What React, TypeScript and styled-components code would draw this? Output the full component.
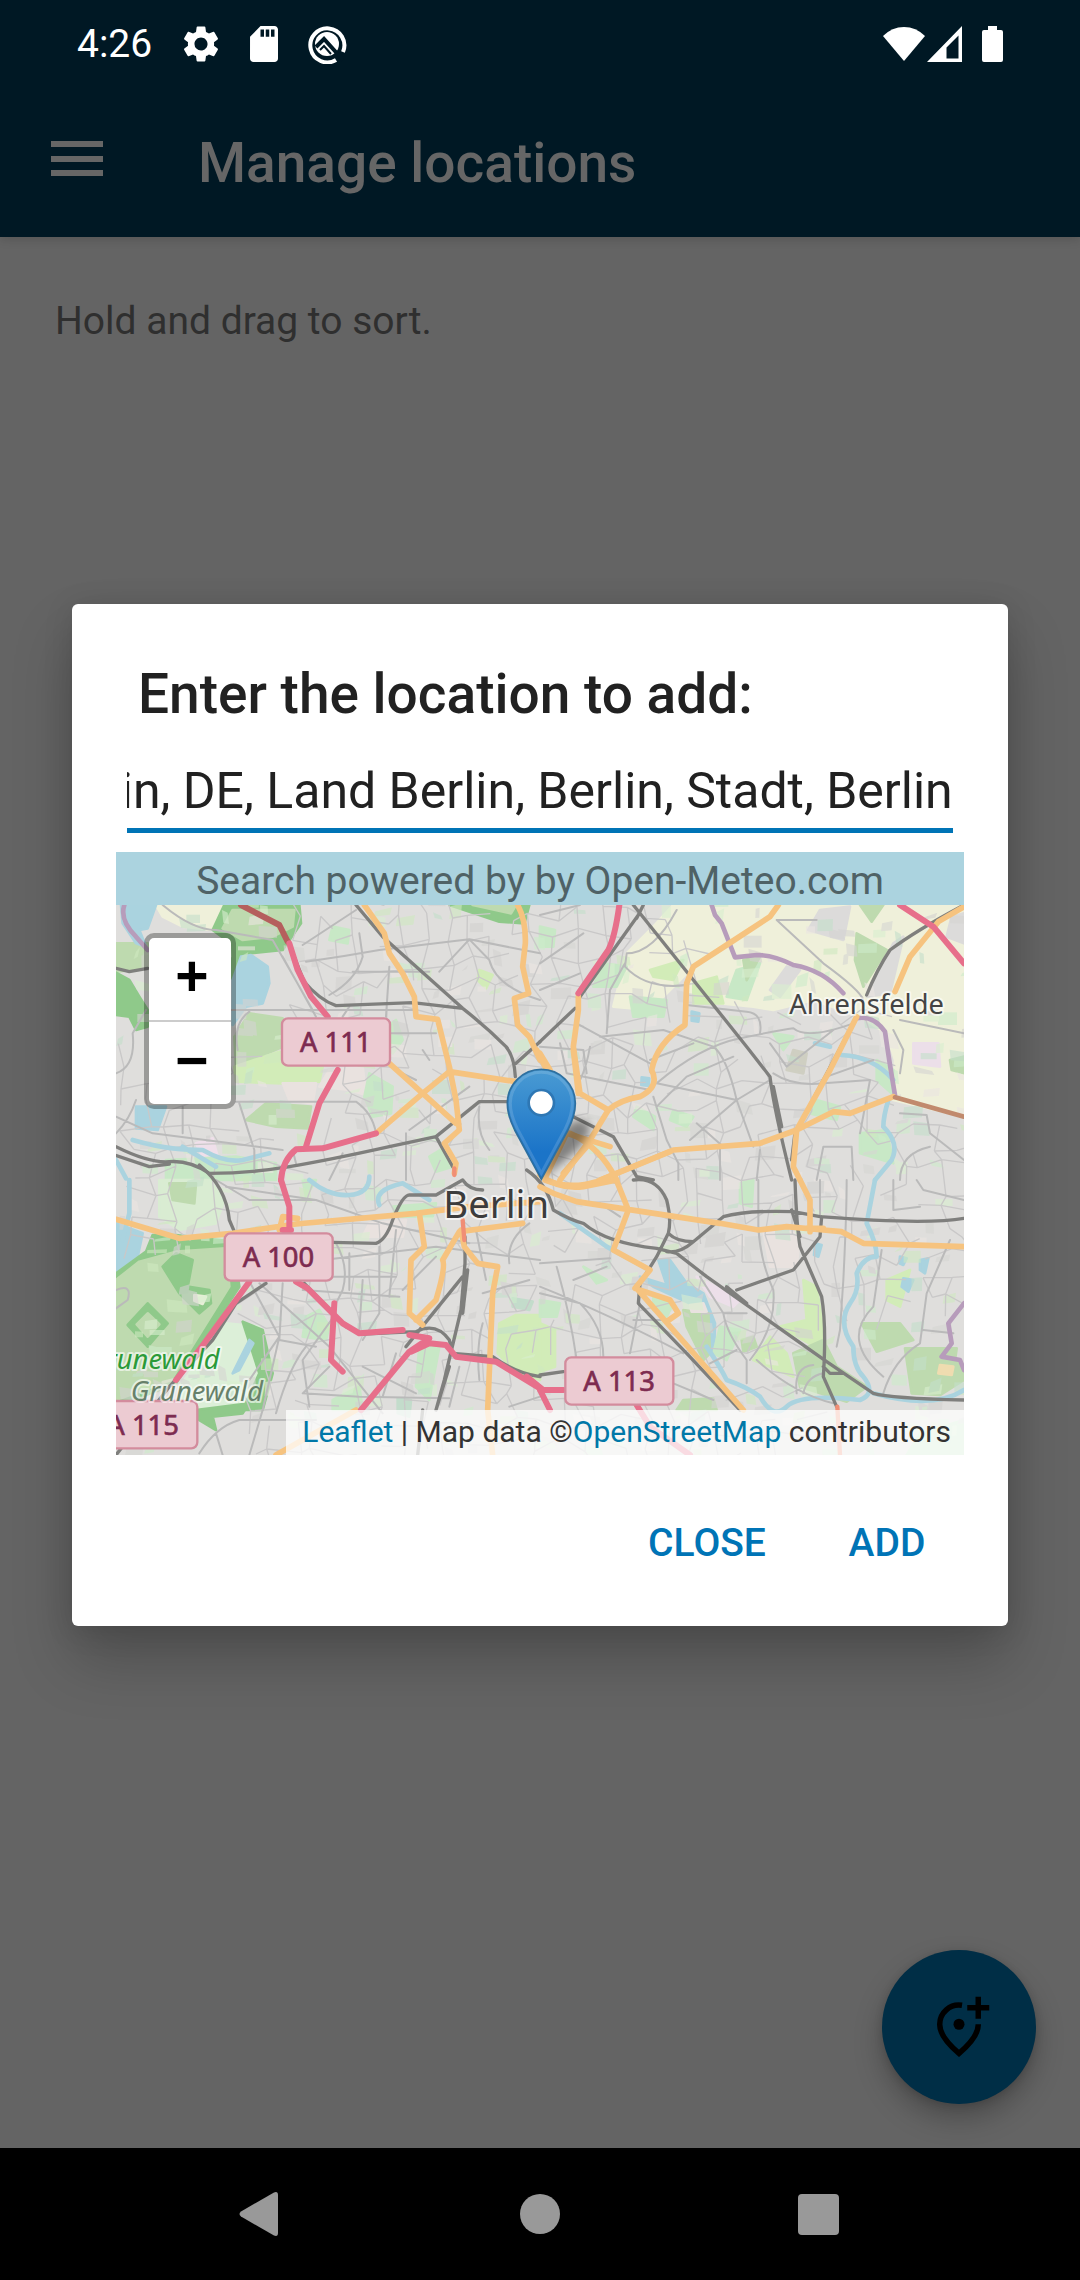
import React, { useEffect, useRef, useState } from "react";
import styled, { createGlobalStyle } from "styled-components";

const GlobalStyle = createGlobalStyle`
  *, *::before, *::after { box-sizing: border-box; }
  body { margin: 0; background: #646464; font-family: Roboto, "Noto Sans", sans-serif; }
  button, input { font: inherit; color: inherit; }
  button { border: 0; padding: 0; background: none; cursor: pointer; }
  svg { display: block; }
`;

const Screen = styled.div`
  position: relative;
  display: flex;
  flex-direction: column;
  min-height: 100vh;
  background: #646464;
`;

const Header = styled.header`
  background: #001824;
  box-shadow: 0 2px 10px rgba(0, 0, 0, 0.16);
`;

const StatusBar = styled.div`
  display: flex;
  align-items: center;
  justify-content: space-between;
  height: 88px;
  padding: 0 77px;
  color: #fff;
  font-size: 39px;
`;

const StatusGroup = styled.div<{ $gap: number }>`
  display: flex;
  align-items: center;
  gap: ${(p) => p.$gap}px;
`;

const Toolbar = styled.div`
  display: flex;
  align-items: center;
  gap: 88px;
  height: 149px;
  padding: 0 44px;
  color: #666;
`;

const MenuButton = styled.button`
  width: 66px;
  height: 74px;
  padding-bottom: 8px;
`;

const PageTitle = styled.h1`
  margin: 0;
  font-size: 55px;
  line-height: 64px;
  font-weight: 500;
`;

const Main = styled.main`
  display: flex;
  flex: 1;
  flex-direction: column;
  justify-content: space-between;
  padding: 61px 44px 44px 55px;
`;

const Hint = styled.p`
  margin: 0;
  color: #2f2f2f;
  font-size: 39px;
  line-height: 46px;
`;

const Fab = styled.button`
  display: grid;
  place-items: center;
  align-self: flex-end;
  width: 154px;
  height: 154px;
  border-radius: 50%;
  background: #002e46;
  color: #000;
  box-shadow: 0 14px 28px rgba(0, 0, 0, 0.26), 0 2px 8px rgba(0, 0, 0, 0.14);
`;

const NavBar = styled.nav`
  display: grid;
  grid-template-columns: repeat(3, 1fr);
  height: 132px;
  padding: 0 123px;
  background: #000;
`;

const NavButton = styled.button`
  display: grid;
  place-items: center;
  color: #999;
`;

const Overlay = styled.div`
  position: absolute;
  inset: 82px 0 132px;
  display: flex;
  align-items: center;
  padding: 0 72px;
`;

const Dialog = styled.section`
  flex: 1;
  min-width: 0;
  padding: 58px 44px 17px;
  border-radius: 6px;
  background: #fff;
  color: #212121;
  box-shadow: 0 34px 60px rgba(0, 0, 0, 0.22), 0 4px 30px rgba(0, 0, 0, 0.12);
`;

const DialogTitle = styled.h2`
  margin: 0 22px 36px;
  font-size: 55px;
  line-height: 64px;
  font-weight: 500;
`;

const FieldRow = styled.div`
  padding: 0 11px 19px;
`;

const LocationInput = styled.input`
  display: block;
  width: 100%;
  height: 71px;
  padding: 0 0 8px;
  border: 0;
  border-bottom: 5px solid #0074b6;
  border-radius: 0;
  outline: 0;
  background: none;
  font-size: 50px;
  line-height: 58px;
`;

const Credit = styled.p`
  margin: 0;
  padding-top: 5px;
  background: #abd3df;
  color: #4f6266;
  font-size: 39px;
  line-height: 48px;
  text-align: center;
`;

const MapFrame = styled.div`
  position: relative;
  aspect-ratio: 848 / 550;
  overflow: hidden;
`;

const ZoomControl = styled.div`
  position: absolute;
  top: 28px;
  left: 28px;
  display: flex;
  flex-direction: column;
  border: 5px solid rgba(0, 0, 0, 0.3);
  border-radius: 10px;
  background: #fff;
  background-clip: padding-box;
`;

const ZoomButton = styled.button`
  width: 82px;
  height: 82px;
  padding: 0 0 6px 4px;
  color: #000;
  font-family: "Liberation Sans", Arial, sans-serif;
  font-size: 57px;
  font-weight: 700;
  line-height: 76px;

  & + & {
    height: 84px;
    border-top: 2px solid #ccc;
  }
`;

const Attribution = styled.div`
  position: absolute;
  right: 0;
  bottom: 0;
  padding: 0 13px 2px 16px;
  background: rgba(255, 255, 255, 0.75);
  color: #333;
  font-size: 30px;
  line-height: 43px;
  white-space: nowrap;

  a {
    color: #0078a8;
    text-decoration: none;
  }
`;

const Actions = styled.div`
  display: flex;
  justify-content: flex-end;
  gap: 4px;
  margin-right: -11px;
  padding-top: 22px;
`;

const ActionButton = styled.button`
  min-width: 176px;
  height: 132px;
  color: #0074b6;
  font-size: 39px;
  font-weight: 500;
`;

/* ---- Map drawing ----------------------------------------------------- */

type Shape = [fill: string, d: string];
type Sheet = { x: number; y: number };

const NW: Sheet = { x: 0, y: 0 };
const NE: Sheet = { x: 1272, y: 0 };
const SW: Sheet = { x: 0, y: 840 };
const SE: Sheet = { x: 1272, y: 840 };
const CENTER: Sheet = { x: 942, y: 450 };

const FARM = "#eff0da";
const WOOD = "#bedaaf";
const WOOD_EDGE = "#8fc98a";
const WATER = "#aad3df";
const GRASS = "#d2ecb8";
const PARK = "#c8e8c6";
const HEATH = "#e9e2df";

const land: { at: Sheet; shapes: Shape[] }[] = [
  {
    at: NW,
    shapes: [
      [FARM, "M120 15H330L290 90 200 80 140 50Z"],
      [WOOD, "M0 130H95V205L0 215Z"],
      [WOOD_EDGE, "M0 218 40 240 70 290 95 330V380L60 390 40 350 0 345Z"],
      [WOOD_EDGE, "M325 15H550L555 70 500 150 400 160 375 235 345 235V130L290 90Z"],
      [WOOD, "M350 30H535L530 80 470 110 380 120 320 85Z"],
      [WATER, "M15 15H120L95 85 70 90 90 140 60 130 20 70Z"],
      [WATER, "M375 170 405 165 455 200 460 250 440 310 390 320 350 375V240Z"],
      [WATER, "M60 620H150L125 690 60 685Z"],
      [WOOD, "M400 340 500 355V440L360 500 355 410Z"],
      [GRASS, "M355 500 490 455 620 500 610 545 500 550 360 545Z"],
      [HEATH, "M640 510 740 500 750 585 700 570 610 560Z"],
      [HEATH, "M500 550 600 550 590 610 520 600Z"],
      [WOOD, "M450 610 585 620 575 685 480 680 390 660Z"],
      [PARK, "M760 520 830 560 825 640 770 650 745 590Z"],
      [WOOD_EDGE, "M1000 15H1240L1225 70 1150 65Z"],
      [WOOD, "M1070 15H1200L1185 40Z"],
      [PARK, "M840 360 860 420 830 460 790 400Z"],
      [PARK, "M650 80 700 90 695 130 640 120Z"],
      [GRASS, "M1090 210 1130 225 1110 265 1085 240Z"],
      [PARK, "M940 770 990 740 1010 800 960 815Z"],
      ["#efdfea", "M240 730 290 715 305 770 265 780Z"],
      [PARK, "M150 780 360 770 480 790 480 840H150Z"],
    ],
  },
  {
    at: NE,
    shapes: [
      [FARM, "M400 15H1272V650L1060 600 1065 480 1040 400 960 350 820 300 700 330 640 320 440 300 450 210 330 330 220 320 260 160 340 80Z"],
      ["#dcdbda", "M840 30 930 20 910 120 805 90Z"],
      ["#dcdbda", "M1235 50 1272 40V130L1220 110Z"],
      ["#dcdbda", "M1060 130 1090 110 1050 280 980 290Z"],
      ["#dcdbda", "M740 200 780 210 720 290 690 270Z"],
      [WOOD, "M950 100 1040 150 970 260 945 180Z"],
      [WOOD, "M960 15H1030L995 65Z"],
      [PARK, "M590 210 660 190 620 300 560 290Z"],
      [WOOD, "M610 180 660 170 620 240Z"],
      [GRASS, "M330 210 430 180 400 240 340 230Z"],
      [PARK, "M270 290 380 300 370 350 280 350Z"],
      [PARK, "M190 190 260 200 230 260 160 260Z"],
      [GRASS, "M460 250 530 230 550 310 460 310Z"],
      ["#ecdfe9", "M1120 430H1195L1200 500 1120 490Z"],
      [WOOD, "M1230 480 1272 470V520L1235 510Z"],
      [PARK, "M1010 480 1060 510 1055 580 1010 540Z"],
      [PARK, "M290 620 345 650 340 690 280 650Z"],
      [PARK, "M400 630 460 650 440 680 390 660Z"],
      [PARK, "M960 700 1040 690 1060 790 960 760Z"],
      ["#cfcfc2", "M760 450 800 460 790 520 740 510Z"],
      [PARK, "M700 400 760 410 730 450Z"],
      [PARK, "M830 600 900 620 890 660 810 640Z"],
      [WATER, "M455 335 478 340 475 365 455 362Z"],
      [WATER, "M305 532 328 535 326 558 304 555Z"],
      [PARK, "M0 80 45 90 40 140 0 140Z"],
    ],
  },
  {
    at: SW,
    shapes: [
      [WATER, "M0 130 80 160 65 230 0 285Z"],
      ["#d9ecd2", "M130 0H280L325 60 300 130 190 150 130 110Z"],
      [WOOD, "M160 10H240L235 70 170 60Z"],
      [WOOD_EDGE, "M110 165H180L350 185 370 320 180 610 0 680V280L90 215Z"],
      [WOOD, "M70 245 180 215 330 205 340 320 165 600 0 660V300Z"],
      [WOOD_EDGE, "M140 260 180 220 230 240 215 320 280 330 285 370 250 400 190 340Z"],
      [WOOD_EDGE, "M95 370 155 430 95 500 35 435Z"],
      [WOOD, "M95 400 130 433 95 470 62 433Z"],
      ["#e8efd8", "M235 345 270 350 260 372 235 362Z"],
      ["#dcefd8", "M330 430 430 440 470 560 440 680 210 690 190 620Z"],
      [WOOD_EDGE, "M380 425 440 450 470 580 440 690 380 690 430 580Z"],
      [WATER, "M400 480 412 490 370 570 350 580Z"],
      [WOOD_EDGE, "M240 690 400 670 380 700 290 710 300 750 250 720Z"],
      [GRASS, "M1150 430 1200 405H1272V600L1200 575 1145 520Z"],
      [PARK, "M570 410 610 390 640 440 630 480 560 470Z"],
      [PARK, "M910 500 970 500 940 660 900 620Z"],
      [PARK, "M650 660 730 620 740 690 650 690Z"],
      ["#c3dccb", "M845 655 885 660 880 710 845 700Z"],
      [PARK, "M830 80 960 70 950 110 840 110Z"],
      ["#c3dccb", "M1190 355 1250 365 1240 390 1190 380Z"],
      [HEATH, "M760 130 870 120 860 170 740 170Z"],
      [PARK, "M560 0H600L570 50Z"],
    ],
  },
  {
    at: SE,
    shapes: [
      [GRASS, "M0 430 45 450V560L0 575Z"],
      [WATER, "M355 240 390 240 440 310 490 340 525 430 522 520 505 520 500 430 460 375 340 320 300 290 380 315Z"],
      ["#ecdfe9", "M470 290 600 360 580 380 510 350Z"],
      [WOOD, "M430 390 505 400 510 520 490 540 440 440Z"],
      [HEATH, "M450 375 490 370 500 395 455 395Z"],
      [HEATH, "M670 150 780 160 770 260 690 260Z"],
      [GRASS, "M790 300 830 320 860 520 720 440 800 420Z"],
      [WOOD, "M965 430 1080 430 1120 480 1010 515Z"],
      [WOOD, "M1095 505 1250 505 1245 540 1272 560V600L1200 645 1115 640Z"],
      [WOOD, "M760 520 850 480 890 560 980 620 920 665 780 620Z"],
      [GRASS, "M640 540 690 470 740 520 760 590Z"],
      [WOOD, "M605 480 640 470 650 500 610 515Z"],
      [WOOD, "M430 660 520 655 530 690H410Z"],
      [PARK, "M540 440 600 450 560 540 520 520Z"],
      [GRASS, "M1040 300 1110 270 1080 380 1040 360Z"],
      [WATER, "M1080 230 1100 235 1090 255 1078 250Z"],
      [WATER, "M1140 240 1165 235 1155 280 1140 270Z"],
      [WATER, "M1090 295 1120 300 1105 335 1085 320Z"],
      [WATER, "M825 190 845 195 835 230 822 225Z"],
      [PARK, "M340 350 400 370 380 410 340 390Z"],
      [PARK, "M600 10 640 0 635 80 600 70Z"],
      [PARK, "M0 360 60 370 50 410 0 410Z"],
      [PARK, "M130 260 200 300 170 310Z"],
      ["#efdcb0", "M1200 555 1240 560 1235 585 1195 580Z"],
      [PARK, "M1140 760 1272 720V825H1100Z"],
    ],
  },
];

const lines: { color: string; width: number; paths: [Sheet, string][] }[] = [
  {
    color: WATER,
    width: 14,
    paths: [
      [NW, "M50 720Q120 740 170 745T260 750Q330 790 380 780L460 760M200 740L300 800M0 780 30 835"],
      [SW, "M40 0V100L20 180M580 0Q640 50 700 45T760 -10M790 75Q770 30 860 10L940 60"],
      [SE, "M60 100 200 200 330 270M500 500Q540 560 560 600Q620 620 660 650Q700 720 740 680T960 660Q1010 640 970 590Q940 560 940 500Q890 430 930 370Q960 330 950 280Q970 230 1010 230 1010 190 980 130L1005 0M1000 640Q1180 690 1272 630"],
      [NE, "M1045 600Q1030 650 1030 680 1080 730 1055 780L1005 840M905 465Q1000 470 1060 540M825 430 870 440"],
    ],
  },
  {
    color: "#bababa",
    width: 6,
    paths: [
      [NW, "M140 15Q230 90 300 90L470 120 590 330M560 135 720 30M570 185Q680 170 790 150L1060 118 1272 160M730 100 740 170Q720 240 640 285M710 215H940M820 200 810 350M330 330H890M365 450Q350 370 400 335M500 170 600 350M700 320 680 350M1060 118 970 215M1272 300Q1140 260 1120 180L1060 118M0 520Q60 500 50 400L90 330M60 600Q40 660 0 700M360 605H720Q770 640 780 700M370 610 415 750V820M200 620V700M0 650 110 700 500 750M870 700V840M920 450 940 480M640 840 680 760M900 540 860 520M1060 560 880 690M1090 620Q1080 700 1120 750M820 400H960M530 750 540 790"],
      [NE, "M0 45 120 15M130 100 0 190M0 270 120 220M260 160 255 200Q320 270 440 255M210 270 200 400M255 190 210 270M440 315 620 335Q670 340 660 400M260 160Q340 160 410 30M710 60 850 190Q960 270 970 300M710 60H830M350 550Q480 440 600 415T760 385Q800 420 940 370M110 370 330 490M180 410 370 390 520 440Q560 470 590 600L640 740M330 480 460 430M350 620 440 530 580 470M350 550 590 600 690 540M700 520Q760 560 850 550L990 540 960 700M340 590 380 720 415 790V840M590 600 450 720M690 430 740 500 880 390M1080 360 1272 400M1060 390 1090 450 1080 520M0 440 130 450 140 520M60 430 80 520 330 570M150 440Q140 500 120 540M860 530 1000 480M1080 640 1160 645 1170 700 1272 780M1080 840Q1080 760 1170 740M650 840 660 750M940 840 935 740H850L830 840M540 740V840M470 670 550 740"],
      [SW, "M330 20 600 60 800 130 1060 190M300 0 400 60H600M660 190Q700 260 680 330L660 370M620 240 960 200 1272 240M560 290 840 290M560 330 850 350M700 220V330M790 200V400L740 480M840 150 820 350M430 310 640 500 800 700M500 310 490 480 600 500M360 230 490 470 440 690 400 825M490 470 400 600M570 500Q520 560 480 700M640 560 560 640 730 650 1000 655M740 300 730 450M960 230 860 330M250 820Q300 740 370 720H600M300 760 320 825M1100 340 1240 300M1080 150 1110 300M1180 250Q1170 180 1240 130M1100 430Q1080 500 1090 600M1180 680 1272 650M0 330Q50 310 35 360L0 385M660 400 560 540 580 680M840 520 800 650M1030 560 1000 680M740 560 900 640"],
      [SE, "M0 250 210 235M0 320Q200 400 430 520M50 260Q90 400 110 540M0 340 120 370Q190 440 190 530M180 70 240 110M300 370 270 520M655 0V140Q660 240 700 330 710 440 630 540M620 610 620 540Q560 460 550 400L480 290M550 400 620 400M650 540Q760 640 880 670M920 0Q920 100 910 300L900 450 890 500M1025 210 1000 380Q900 480 1030 590M1030 640Q1060 540 1140 490L1160 340 1230 180M1060 0V90L1140 80M1150 450 1240 460M840 110V0M770 640Q760 560 820 555M790 640Q800 590 850 580M400 610 520 660M510 550 590 510M1130 0 1150 30 1272 60M380 420 280 420M100 300 200 260"],
    ],
  },
  {
    color: "#b79cbb",
    width: 14,
    paths: [
      [NE, "M515 15 525 45 545 70 585 172 650 165Q700 165 760 195 850 210 910 280M950 355Q1000 345 1035 395 1050 500 1065 585"],
      [NW, "M25 15Q10 60 60 110L95 150"],
      [SE, "M1272 370 1225 430 1235 490 1205 530 1260 540 1272 570"],
    ],
  },
  {
    color: "#7f7f7d",
    width: 10,
    paths: [
      [NW, "M720 15 800 110 1040 325Q1110 380 1170 440 1195 470 1198 530M1200 490 1272 425M560 240Q610 300 660 317L890 308 1040 325M0 740Q100 790 160 785T280 820Q400 820 520 800T820 740L960 710 1090 605H1180M960 710 1010 800M0 205 40 215 95 205M515 120 570 260"],
      [NE, "M0 425 105 325M120 290 295 45M280 15 620 440 690 530Q700 620 755 840M310 15 290 55M1272 15Q1130 90 1050 150 1010 210 980 285M945 360 850 540 765 700 755 780M100 650 220 710 290 830 340 840M700 560 725 680"],
      [SW, "M-20 -80 100 -40 160 -48M250 -45Q330 20 340 120L355 155M650 187 780 190Q810 180 830 120 860 45 880 45H960L1040 0Q1060 30 1100 30M1047 170V250L1035 390 985 600 960 690M1055 270 1040 400M450 310 360 370 290 480 160 620 0 825M565 310 690 440 740 462 900 455Q960 425 1000 480L1010 520 1130 530Q1200 580 1272 590M920 690 905 825M1040 290 870 500M960 690 1000 560"],
      [SE, "M-40 -30Q20 10 40 90 90 120 130 130 200 190 350 205L410 220 500 290 860 545 1000 640Q1050 655 1272 660M280 0Q350 -10 380 60 395 120 385 160L350 230 300 310 295 370 440 520 600 690M385 160Q410 185 460 185L550 110Q620 90 760 95L840 110Q1160 135 1272 115M765 0Q770 140 780 200L845 350Q860 440 850 590L890 680M590 330 760 270 840 170 845 110M460 185Q420 220 380 215M850 560 870 580 910 580M0 585 70 575M560 320 620 370M755 90 780 170"],
    ],
  },
  {
    color: "#f6c37f",
    width: 17,
    paths: [
      [NW, "M745 15 805 100 820 160 860 220 895 290 900 350 965 358 1000 500 1020 600 1030 690 985 730 1020 790 1015 820M820 490 920 580 1020 670M780 700 920 580 1000 515 1200 545M1205 15Q1230 60 1228 130L1220 200 1238 280 1195 295 1205 375 1240 410 1272 480"],
      [NE, "M0 460 30 510M115 290V330L100 440 120 580 205 630 150 720 60 840M205 630Q240 600 300 590 360 560 335 510 350 430 435 375L440 250 460 200 560 135 690 50 715 15M1272 20 1195 65 1110 170 1065 275M950 350 870 510 770 690 760 800 780 840M180 840 400 750 660 730 770 690 880 635 930 640 1060 590M90 700Q180 740 230 840"],
      [SW, "M0 118 190 175 350 160 540 132 900 100 1060 80 1272 65M490 150 500 110 545 115M910 100 925 200 885 240 880 400 920 435M900 420 960 360Q990 260 980 240L1030 155 1220 130M1035 150 1045 200 1085 250 1145 260 1130 340 1115 690 1130 825M480 825 720 690"],
      [SE, "M0 20 40 40 110 65 540 130 655 150 740 140 850 150 905 155 970 190 1272 200M0 -15Q60 30 130 20L230 0M225 -10 265 90 220 210 330 270 285 325 390 360 415 400 380 425M290 325 610 690M780 0 810 60V155M800 145H850"],
      [CENTER, "M320 0 350 60M430 0 445 130M345 385 410 250 540 290M345 390Q420 420 500 395L720 305M400 370 470 290"],
    ],
  },
  {
    color: "#f08e75",
    width: 13,
    paths: [
      [NW, "M1015 805V825"],
      [SW, "M1040 120 1045 180"],
      [SE, "M892 680 900 825"],
    ],
  },
  {
    color: "#c18a6d",
    width: 14,
    paths: [[NE, "M1065 592 1272 650"]],
  },
  {
    color: "#b55f5d",
    width: 18,
    paths: [
      [NW, "M375 15 490 75 515 125"],
    ],
  },
  {
    color: "#e76f8b",
    width: 18,
    paths: [
      [NW, "M520 130 545 210 585 290 635 350M665 510 610 610 570 740M780 700 620 745 540 748Q500 780 495 840"],
      [NE, "M238 15Q225 110 205 150L115 280M1080 15 1180 80 1272 190"],
      [SW, "M495 0 520 80V155M500 150H525M400 305 265 490 180 600M540 305 575 325 680 430 730 460 860 450M655 370 645 540 680 575M880 465 940 475 880 515 735 690M885 515 940 490 990 495 1020 530 1140 545 1272 625"],
      [SE, "M0 630H70M0 630 30 690M290 675 330 740 450 825M-40 590 10 630"],
    ],
  },
];

const patchColors = ["#cdeccb", "#d9efd0", "#d3d2d0", "#d6d6d3", "#ebe6e2", "#c4dfcb", "#cfe9c0", "#d5d4d2"];

function buildTexture() {
  let seed = 20477;
  const rand = () => {
    seed = (seed * 16807) % 2147483647;
    return seed / 2147483647;
  };
  const patches: Shape[] = [];
  for (let i = 0; i < 620; i += 1) {
    const x = rand() * 2544;
    const y = rand() * 1650;
    const w = 12 + rand() * 50;
    const h = 10 + rand() * 36;
    const s = (rand() - 0.5) * 30;
    const color = patchColors[Math.floor(rand() * patchColors.length)];
    patches.push([color, `M${x | 0} ${y | 0}l${w | 0} ${s | 0}l${(s / 2) | 0} ${h | 0}l${-w | 0} ${(-s / 2) | 0}Z`]);
  }
  const step = 66;
  const cols = 40;
  const rows = 27;
  const nodes = Array.from({ length: rows }, (_, r) =>
    Array.from({ length: cols }, (_, c) => [
      Math.round(c * step + (rand() - 0.5) * 50 + r * 3),
      Math.round(r * step + (rand() - 0.5) * 50 - c * 2 + 20),
    ]),
  );
  const open = (x: number, y: number) =>
    (x > 1720 && y < 300) ||
    (x > 2320 && y < 620) ||
    (x < 360 && y > 1020) ||
    (x > 340 && x < 640 && y > 330 && y < 700) ||
    (x < 520 && y < 420) ||
    (x > 2050 && y > 1250) ||
    (x > 2420 && y > 1200);
  let streets = "";
  for (let r = 0; r < rows; r += 1) {
    for (let c = 0; c < cols; c += 1) {
      const [x, y] = nodes[r][c];
      if (open(x, y)) continue;
      if (c + 1 < cols && rand() < 0.62) streets += `M${x} ${y}L${nodes[r][c + 1].join(" ")}`;
      if (r + 1 < rows && rand() < 0.62) streets += `M${x} ${y}L${nodes[r + 1][c].join(" ")}`;
    }
  }
  return { patches, streets };
}

const texture = buildTexture();

const MapText = styled.text<{ $size: number; $color: string; $italic?: boolean }>`
  fill: ${(p) => p.$color};
  font-family: "Noto Sans", "Open Sans", sans-serif;
  font-size: ${(p) => p.$size}px;
  font-style: ${(p) => (p.$italic ? "italic" : "normal")};
  paint-order: stroke;
  stroke: rgba(255, 255, 255, 0.6);
  stroke-width: 12px;
  stroke-linejoin: round;
`;

const ShieldText = styled.text`
  fill: #7d2b50;
  stroke: #7d2b50;
  stroke-width: 2px;
  font-family: "Noto Sans", "Open Sans", sans-serif;
  font-size: 82px;
`;

const shields = [
  { x: 498, y: 355, label: "A 111" },
  { x: 326, y: 1000, label: "A 100" },
  { x: 1348, y: 1372, label: "A 113" },
  { x: -80, y: 1503, label: "A 115" },
];

const shift = (s: Sheet) => `translate(${s.x} ${s.y})`;

function BerlinMap() {
  return (
    <svg viewBox="0 15 2544 1650" width="100%" height="100%" preserveAspectRatio="xMidYMid slice" role="img" aria-label="Map of Berlin">
      <defs>
        <linearGradient id="pin" x1="0" y1="0" x2="0" y2="1">
          <stop offset="0" stopColor="#4a9bd3" />
          <stop offset="0.75" stopColor="#1b74c8" />
        </linearGradient>
        <filter id="soft" x="-50%" y="-50%" width="200%" height="200%">
          <feGaussianBlur stdDeviation="12" />
        </filter>
      </defs>
      <rect y="15" width="2544" height="1650" fill="#dfdedc" />
      {land.map(({ at, shapes }, i) => (
        <g key={i} transform={shift(at)}>
          {shapes.map(([fill, d]) => (
            <path key={d} d={d} fill={fill} stroke={fill} strokeWidth="8" strokeLinejoin="round" />
          ))}
        </g>
      ))}
      <g opacity="0.6">
        {texture.patches.map(([fill, d]) => (
          <path key={d} d={d} fill={fill} />
        ))}
      </g>
      <path d={texture.streets} fill="none" stroke="#c9c8c8" strokeWidth="4" />
      {lines.map(({ color, width, paths }) => (
        <g key={color} fill="none" stroke={color} strokeWidth={width} strokeLinecap="round" strokeLinejoin="round">
          {paths.map(([at, d]) => (
            <path key={d} d={d} transform={shift(at)} />
          ))}
        </g>
      ))}
      {shields.map(({ x, y, label }) => (
        <g key={label}>
          <rect x={x} y={y} width="324" height="142" rx="18" fill="#eccbd2" stroke="#d38c9d" strokeWidth="7" />
          <ShieldText x={x + 54} y={y + 102}>
            {label}
          </ShieldText>
        </g>
      ))}
      <MapText x="2020" y="342" $size={82} $color="#444">Ahrensfelde</MapText>
      <MapText x="982" y="953" $size={115} $color="#3c3c3c">Berlin</MapText>
      <MapText x="311" y="1408" textAnchor="end" $size={82} $color="#2b9a38" $italic>Grunewald</MapText>
      <MapText x="44" y="1502" $size={82} $color="#67806a" $italic>Grunewald</MapText>
      <g transform={shift(CENTER)}>
        <path d="M334 388 385 270Q420 195 470 215 500 240 430 310Z" fill="#000" opacity="0.42" filter="url(#soft)" />
        <path
          d="M232 160A102 102 0 0 1 436 160C436 192 424 220 414 240L334 388 254 240C244 220 232 192 232 160Z"
          fill="url(#pin)"
          stroke="#2e6f9f"
          strokeWidth="5"
        />
        <path
          d="M241 160A93 93 0 0 1 427 160C427 190 416 216 406 236L334 370 262 236C252 216 241 190 241 160Z"
          fill="none"
          stroke="#fff"
          strokeOpacity="0.14"
          strokeWidth="9"
        />
        <circle cx="334" cy="158" r="38" fill="#fff" stroke="#2e77b4" strokeWidth="8" />
      </g>
    </svg>
  );
}

/* ---- Icons ------------------------------------------------------------ */

const GearIcon = () => (
  <svg width="40" height="40" viewBox="1 1 22 22" fill="#fff" aria-hidden="true">
    <path d="M19.14 12.94c.04-.3.06-.61.06-.94 0-.32-.02-.64-.07-.94l2.03-1.58a.49.49 0 0 0 .12-.61l-1.92-3.32a.488.488 0 0 0-.59-.22l-2.39.96c-.5-.38-1.03-.7-1.62-.94l-.36-2.54a.484.484 0 0 0-.48-.41h-3.84c-.24 0-.43.17-.47.41l-.36 2.54c-.59.24-1.13.57-1.62.94l-2.39-.96c-.22-.08-.47 0-.59.22L2.74 8.87c-.12.21-.08.47.12.61l2.03 1.58c-.05.3-.09.63-.09.94s.02.64.07.94l-2.03 1.58a.49.49 0 0 0-.12.61l1.92 3.32c.12.22.37.29.59.22l2.39-.96c.5.38 1.03.7 1.62.94l.36 2.54c.05.24.24.41.48.41h3.84c.24 0 .44-.17.47-.41l.36-2.54c.59-.24 1.13-.56 1.62-.94l2.39.96c.22.08.47 0 .59-.22l1.92-3.32c.12-.22.07-.47-.12-.61l-2.01-1.58zM12 15.6A3.61 3.61 0 0 1 8.4 12c0-1.98 1.62-3.6 3.6-3.6s3.6 1.62 3.6 3.6-1.62 3.6-3.6 3.6z" />
  </svg>
);

const CardIcon = () => (
  <svg width="28" height="36" viewBox="4 2 16 20" preserveAspectRatio="none" fill="#fff" aria-hidden="true">
    <path d="M18 2h-8L4.02 8 4 20c0 1.1.9 2 2 2h12c1.1 0 2-.9 2-2V4c0-1.1-.9-2-2-2zm-6 6h-2V4h2v4zm3 0h-2V4h2v4zm3 0h-2V4h2v4z" />
  </svg>
);

const SearchBadgeIcon = () => (
  <svg width="40" height="40" viewBox="0 0 40 40" fill="none" aria-hidden="true">
    <path d="M29 36A17 17 0 1 1 36 28" stroke="#fff" strokeWidth="4" />
    <circle cx="20" cy="20" r="12" fill="#fff" />
    <path d="M9 23 17 15 36 36" stroke="#001824" strokeWidth="4" />
    <path d="M13 26 17 22 24 30" stroke="#001824" strokeWidth="2" />
  </svg>
);

const WifiIcon = () => (
  <svg width="42" height="36" viewBox="0 0 42 36" fill="#fff" aria-hidden="true">
    <path d="M0 10Q9 1 21 1T42 10L21 35Z" />
  </svg>
);

const SignalIcon = () => (
  <svg width="35" height="36" viewBox="0 0 35 36" aria-hidden="true">
    <path fill="#fff" fillRule="evenodd" d="M35 0V36H0ZM31.5 9.5 19.5 21.5V32.5H31.5Z" />
  </svg>
);

const BatteryIcon = () => (
  <svg width="21" height="36" viewBox="0 0 21 36" fill="#fff" aria-hidden="true">
    <path d="M6 0H15V4H19Q21 4 21 6V34Q21 36 19 36H2Q0 36 0 34V6Q0 4 2 4H6Z" />
  </svg>
);

const AddPlaceIcon = () => (
  <svg width="66" height="66" viewBox="0 0 24 24" fill="none" stroke="currentColor" strokeWidth="2" aria-hidden="true">
    <path d="M13.1 4.1A7 7 0 0 0 5 11.2c0 3 2.3 6.4 7 10.4 4.7-4 7-7.4 7-10.4V11M19 1v8M15 5h8" />
    <circle cx="12" cy="11" r="2" fill="currentColor" stroke="none" />
  </svg>
);

export default function App() {
  const [place, setPlace] = useState("Berlin, DE, Land Berlin, Berlin, Stadt, Berlin");
  const field = useRef<HTMLInputElement>(null);

  useEffect(() => {
    const el = field.current;
    if (!el) return;
    el.scrollLeft = el.scrollWidth;
  }, []);

  return (
    <>
      <GlobalStyle />
      <Screen>
        <Header>
          <StatusBar>
            <StatusGroup $gap={29}>
              <span>4:26</span>
              <GearIcon />
              <CardIcon />
              <SearchBadgeIcon />
            </StatusGroup>
            <StatusGroup $gap={20}>
              <StatusGroup $gap={2}>
                <WifiIcon />
                <SignalIcon />
              </StatusGroup>
              <BatteryIcon />
            </StatusGroup>
          </StatusBar>
          <Toolbar>
            <MenuButton aria-label="Open menu">
              <svg width="66" height="66" viewBox="0 0 66 66" fill="currentColor" aria-hidden="true">
                <path d="M7 15H59V21H7ZM7 30H59V36H7ZM7 44H59V50H7Z" />
              </svg>
            </MenuButton>
            <PageTitle>Manage locations</PageTitle>
          </Toolbar>
        </Header>
        <Main>
          <Hint>Hold and drag to sort.</Hint>
          <Fab aria-label="Add location">
            <AddPlaceIcon />
          </Fab>
        </Main>
        <NavBar>
          <NavButton aria-label="Back">
            <svg width="46" height="46" viewBox="0 0 46 46" fill="currentColor" aria-hidden="true">
              <path d="M2 20.5 35 1.5Q39 0 39 4V42Q39 46 35 44.5L2 25.5Q-1 23 2 20.5Z" />
            </svg>
          </NavButton>
          <NavButton aria-label="Home">
            <svg width="40" height="40" viewBox="0 0 40 40" fill="currentColor" aria-hidden="true">
              <circle cx="20" cy="20" r="20" />
            </svg>
          </NavButton>
          <NavButton aria-label="Recent apps">
            <svg width="41" height="41" viewBox="0 0 41 41" fill="currentColor" aria-hidden="true">
              <rect width="41" height="41" rx="4" />
            </svg>
          </NavButton>
        </NavBar>
        <Overlay>
          <Dialog role="dialog" aria-labelledby="dialog-title">
            <DialogTitle id="dialog-title">
              <label htmlFor="place">Enter the location to add:</label>
            </DialogTitle>
            <FieldRow>
              <LocationInput id="place" ref={field} type="text" value={place} onChange={(e) => setPlace(e.target.value)} />
            </FieldRow>
            <Credit>Search powered by by Open-Meteo.com</Credit>
            <MapFrame>
              <BerlinMap />
              <ZoomControl>
                <ZoomButton aria-label="Zoom in">+</ZoomButton>
                <ZoomButton aria-label="Zoom out">−</ZoomButton>
              </ZoomControl>
              <Attribution>
                <a href="#leaflet">Leaflet</a> | Map data ©<a href="#osm">OpenStreetMap</a> contributors
              </Attribution>
            </MapFrame>
            <Actions>
              <ActionButton>CLOSE</ActionButton>
              <ActionButton>ADD</ActionButton>
            </Actions>
          </Dialog>
        </Overlay>
      </Screen>
    </>
  );
}
